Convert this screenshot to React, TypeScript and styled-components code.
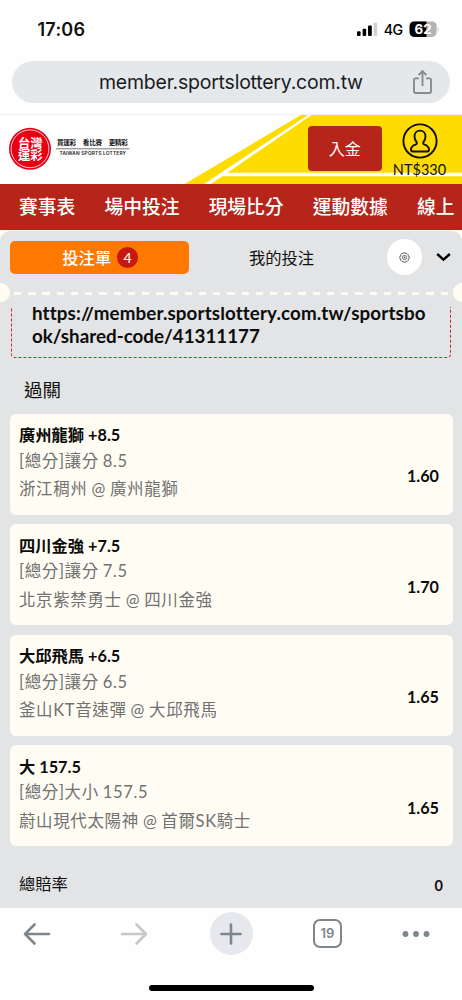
import React from 'react';
import styled, { createGlobalStyle } from 'styled-components';

const RED = '#b5251a';
const YELLOW = '#ffdc00';
const CREAM = '#fffdf3';
const PANEL = '#e3e4e6';
const ICON_GREY = '#7c868b';

const GlobalStyle = createGlobalStyle`
  * { box-sizing: border-box; }
  html, body { margin: 0; padding: 0; background: #fefefe; }
  body { font-family: Lato, "Noto Sans CJK TC", sans-serif; color: #111; }
  button { font: inherit; border: 0; padding: 0; margin: 0; background: none; color: inherit; }
  svg { display: block; flex: none; }
`;

const Screen = styled.div`
  width: 462px;
  height: 1000px;
  display: flex;
  flex-direction: column;
  overflow: hidden;
  background: #fefefe;
`;

const StatusBar = styled.div`
  height: 61px;
  flex: none;
  display: flex;
  justify-content: space-between;
  padding: 19px 22px 0 37.5px;
  font-family: Inter, sans-serif;
`;

const Clock = styled.div`
  font-size: 18px;
  font-weight: 600;
  line-height: 21px;
  letter-spacing: 0.25px;
`;

const AddressArea = styled.div`
  height: 54px;
  flex: none;
  padding: 0 12px;
  border-bottom: 1px solid #f1f1f1;
`;

const AddressBar = styled.div`
  height: 42px;
  border-radius: 21px;
  background: #e5e8eb;
  display: flex;
  align-items: center;
  justify-content: space-between;
  padding: 0 17px 0 87px;
  font-family: Inter, sans-serif;
  font-size: 19.5px;
  letter-spacing: -0.23px;
  color: #1a1c1e;
`;

const AddressText = styled.span`
  padding-bottom: 1px;
`;

const Header = styled.header`
  height: 69px;
  flex: none;
  position: relative;
  display: flex;
  align-items: flex-start;
  padding: 0 15.5px 0 8px;
`;

const HeaderArt = styled.svg`
  position: absolute;
  inset: 0;
`;

const Brand = styled.svg`
  position: relative;
  margin-top: 11px;
`;

const Deposit = styled.button`
  position: relative;
  width: 73.5px;
  height: 45px;
  margin: 11px 11px 0 auto;
  border-radius: 4px;
  background: ${RED};
  color: #fff;
  font-size: 16px;
  padding-bottom: 1px;
`;

const Account = styled.div`
  position: relative;
  width: 54px;
  display: flex;
  flex-direction: column;
  align-items: center;
  padding-top: 8px;
  white-space: nowrap;
  font-size: 14.5px;
  line-height: 18px;
`;

const Balance = styled.span`
  margin-top: 2px;
`;

const Nav = styled.nav`
  height: 46px;
  flex: none;
  display: flex;
  gap: 29.2px;
  padding-left: 19px;
  background: ${RED};
  color: #fff;
  font-size: 18.75px;
  font-weight: 500;
  line-height: 45px;
  white-space: nowrap;
  overflow: hidden;
`;

const SlipBackdrop = styled.div`
  flex: 1;
  min-height: 0;
  background: ${CREAM};
  border-bottom: 1px solid #d7d8da;
`;

const Slip = styled.main`
  height: 100%;
  margin-top: 1px;
  border-radius: 10px 10px 0 0;
  background: ${PANEL};
  overflow: hidden;
`;

const TabRow = styled.div`
  height: 52px;
  display: flex;
  align-items: center;
  padding: 0 11px 0 9.5px;
  font-size: 16.3px;
`;

const ActiveTab = styled.button`
  width: 179.5px;
  height: 33px;
  border-radius: 5px;
  background: #ff7900;
  color: #fff;
  font-weight: 500;
  display: flex;
  align-items: center;
  justify-content: center;
  gap: 6px;
  padding-left: 2px;
`;

const Count = styled.span`
  width: 21px;
  height: 21px;
  border-radius: 50%;
  background: #c5190f;
  font-size: 14px;
  line-height: 21px;
  text-align: center;
`;

const Tab = styled.button`
  margin-left: 60px;
  padding-bottom: 1px;
`;

const GearButton = styled.button`
  width: 35.5px;
  height: 35.5px;
  margin-left: auto;
  border-radius: 50%;
  background: #fff;
  display: grid;
  place-items: center;
`;

const Chevron = styled.svg`
  margin-left: 14px;
`;

const Perforation = styled.div`
  height: 19px;
  display: flex;
  align-items: center;
  justify-content: space-between;
`;

const Notch = styled.span<{ $side: 'left' | 'right' }>`
  width: 9.5px;
  height: 19px;
  background: ${CREAM};
  border-radius: ${p => (p.$side === 'left' ? '0 10px 10px 0' : '10px 0 0 10px')};
`;

const Dashes = styled.span`
  height: 2.5px;
  margin: 2px 0 0 4px;
  flex: 1;
  background: repeating-linear-gradient(90deg, ${CREAM} 0 7.3px, transparent 7.3px 14.22px);
`;

const CodeWindow = styled.div`
  height: 51px;
  margin: 5px 11px 1px 11px;
  overflow: hidden;
  display: flex;
  align-items: flex-end;
`;

const CodeBox = styled.div`
  flex: 1;
  height: 80px;
  display: flex;
  align-items: flex-end;
  border: 1px dashed #cc2430;
  border-radius: 4px;
  padding: 0 0 10px 20px;
  font-size: 18.8px;
  font-weight: 700;
  line-height: 23px;
  color: #0c0c0c;
  white-space: nowrap;
`;

const CodeLine = styled.div<{ $tracking?: number }>`
  letter-spacing: ${p => p.$tracking ?? 0}px;
`;

const SectionTitle = styled.h2`
  margin: 0;
  padding: 17px 0 0 24px;
  height: 54.8px;
  font-size: 18.5px;
  font-weight: 400;
  line-height: 28px;
`;

const Cards = styled.div`
  display: flex;
  flex-direction: column;
  gap: 9.3px;
  padding: 0 9.5px;
`;

const Card = styled.article`
  height: 101.2px;
  border-radius: 6px;
  background: ${CREAM};
  display: flex;
  justify-content: space-between;
  padding: 9.5px 13.5px 0 9.5px;
  white-space: nowrap;
`;

const Pick = styled.div`
  font-size: 16.3px;
  font-weight: 700;
  line-height: 24px;
  color: #0c0c0c;
`;

const Detail = styled.div<{ $gap: number }>`
  margin-top: ${p => p.$gap}px;
  font-size: 16.5px;
  letter-spacing: 0.62px;
  word-spacing: -0.8px;
  line-height: 24px;
  color: #717171;
`;

const Odds = styled.div`
  margin-top: 41px;
  font-size: 16.2px;
  font-weight: 700;
  line-height: 24px;
  color: #0c0c0c;
`;

const TotalRow = styled.div`
  display: flex;
  justify-content: space-between;
  padding: 25px 19px 0 19px;
  font-size: 16.3px;
  line-height: 26px;
`;

const TotalValue = styled.span`
  font-size: 14.5px;
  font-weight: 700;
  padding-top: 2px;
`;

const Toolbar = styled.footer`
  height: 92px;
  flex: none;
  display: flex;
  flex-direction: column;
  align-items: center;
  justify-content: space-between;
  padding: 4px 0 9px;
`;

const ToolRow = styled.div`
  width: 100%;
  height: 43px;
  display: grid;
  grid-template-columns: 74px 120px 74px 119px 57px;
  align-items: center;
  justify-items: center;
`;

const PlusButton = styled.button`
  width: 43px;
  height: 43px;
  border-radius: 50%;
  background: #e7e8ed;
  display: grid;
  place-items: center;
`;

const TabCount = styled.button`
  width: 29px;
  height: 29px;
  border: 2px solid ${ICON_GREY};
  border-radius: 7px;
  color: ${ICON_GREY};
  font-family: Inter, sans-serif;
  font-size: 13px;
  font-weight: 600;
  line-height: 25px;
`;

const HomeIndicator = styled.div`
  width: 165px;
  height: 6px;
  border-radius: 3px;
  background: #000;
`;

const StatusIcons = () => (
  <svg width="84" height="20" viewBox="357 19 84 20" fontFamily="Inter, sans-serif">
    <rect x="358" y="31.3" width="3.6" height="4.7" rx="1" />
    <rect x="363.6" y="28.8" width="3.6" height="7.2" rx="1" />
    <rect x="369" y="25.5" width="3.8" height="10.5" rx="1" />
    <rect x="374.7" y="22.7" width="3.4" height="13.3" rx="1" fill="#d0d0d0" />
    <text x="384.7" y="35.3" fontSize="14.2" fontWeight="500" textLength="19.5">4G</text>
    <clipPath id="cell"><rect x="410.6" y="21.5" width="27" height="15.4" rx="4.5" /></clipPath>
    <g clipPath="url(#cell)">
      <rect x="410" y="21" width="28" height="17" fill="#b3b3b3" />
      <rect x="410" y="21" width="17.4" height="17" />
    </g>
    <path d="M438.6 27.2c1.4.4 1.4 3.8 0 4.4z" fill="#b3b3b3" />
    <text x="415.6" y="34.1" fontSize="13.3" fontWeight="700" fill="#fff" textLength="17">62</text>
  </svg>
);

const ShareIcon = () => (
  <svg width="21" height="26" viewBox="0 0 21 26" fill="none" stroke="#868b90" strokeWidth="1.9">
    <path d="M7 9.4H3.6Q2 9.4 2 11v11.2Q2 24 3.8 24h13.4Q19 24 19 22.2V11q0-1.6-1.6-1.6H14M10.5 17V2.2M6.6 6.2l3.9-4 3.9 4" />
  </svg>
);

const BrandLogo = () => (
  <Brand width="124" height="46" viewBox="8 126 124 46" fontFamily='"Noto Sans CJK TC", sans-serif'>
    <circle cx="30" cy="148.8" r="21" fill="#e60012" />
    <circle cx="30" cy="148.8" r="18.9" fill="none" stroke="#fff" strokeWidth="0.8" />
    <g fill="#fff" fontSize="12.3" fontWeight="700">
      <text x="18" y="148.2" textLength="24.6">台灣</text>
      <text x="18" y="160.2" textLength="24.6">運彩</text>
    </g>
    <g fontSize="6.6" fontWeight="700" fill="#111">
      <text x="57" y="145.3" textLength="19">買運彩</text>
      <text x="82.7" y="145.3" textLength="19.5">看比賽</text>
      <text x="108.8" y="145.3" textLength="19">更精彩</text>
    </g>
    <path d="M56 148.8h73.5" stroke="#555" strokeWidth="0.8" />
    <text x="59.5" y="155.3" fontSize="4.8" fontWeight="600" fontFamily="Inter, sans-serif" fill="#222" textLength="66.5">TAIWAN SPORTS LOTTERY</text>
  </Brand>
);

const UserIcon = () => (
  <svg width="36" height="36" viewBox="0 0 36 36" fill="none" stroke="#111" strokeWidth="1.9">
    <circle cx="18" cy="18" r="16.6" />
    <path d="M18 7.6c-3.5 0-5.5 2.5-5.5 5.8 0 2.6 1 4.3 2.1 5.7.5 1 .2 1.9-.7 2.3-2.6 1-4.7 2-4.9 4.8 0 1.6.5 2.3 1.8 2.3h14.4c1.3 0 1.8-.7 1.8-2.3-.2-2.8-2.3-3.8-4.9-4.8-.9-.4-1.2-1.3-.7-2.3 1.1-1.4 2.1-3.1 2.1-5.7 0-3.3-2-5.8-5.5-5.8z" />
  </svg>
);

const GearIcon = () => (
  <svg width="11" height="11" viewBox="0 0 22 22" fill="none" stroke="#444" strokeWidth="1.5">
    <path d="M9 1.5h4l.8 2.3 2.2-1 2.9 2.9-1 2.3 2.6 1v4l-2.6 1 1 2.3-2.9 2.9-2.2-1-.8 2.3H9l-.9-2.3-2.3 1-2.9-2.9 1-2.3-2.4-1V9l2.4-1-1-2.3 2.900-2.900 2.300 1z" />
    <circle cx="11" cy="11" r="4.2" />
    <circle cx="11" cy="11" r="1" />
  </svg>
);

const Arrow = ({ forward }: { forward?: boolean }) => (
  <svg width="28" height="24" viewBox="0 0 28 24" fill="none" stroke={forward ? '#c6c7c8' : ICON_GREY} strokeWidth="2.6" strokeLinecap="round" strokeLinejoin="round">
    {forward ? <path d="M2 12h24M16.5 2.5L26 12l-9.5 9.5" /> : <path d="M26 12H2M11.5 2.5L2 12l9.5 9.5" />}
  </svg>
);

const bets = [
  { pick: '廣州龍獅 +8.5', market: '[總分]讓分 8.5', match: '浙江稠州 @ 廣州龍獅', odds: '1.60' },
  { pick: '四川金強 +7.5', market: '[總分]讓分 7.5', match: '北京紫禁勇士 @ 四川金強', odds: '1.70' },
  { pick: '大邱飛馬 +6.5', market: '[總分]讓分 6.5', match: '釜山KT音速彈 @ 大邱飛馬', odds: '1.65' },
  { pick: '大 157.5', market: '[總分]大小 157.5', match: '蔚山現代太陽神 @ 首爾SK騎士', odds: '1.65' },
];

export default function App() {
  return (
    <Screen>
      <GlobalStyle />
      <StatusBar>
        <Clock>17:06</Clock>
        <StatusIcons />
      </StatusBar>
      <AddressArea>
        <AddressBar>
          <AddressText>member.sportslottery.com.tw</AddressText>
          <ShareIcon />
        </AddressBar>
      </AddressArea>
      <Header>
        <HeaderArt width="462" height="69" viewBox="0 115 462 69">
          <path d="M184.5 184L301 115H462v69z" fill={YELLOW} />
          <path d="M204 184L308 115h3.5L211 184z" fill="#fff" />
          <path d="M224 172.7H462v3.5H219z" fill="#fff" />
        </HeaderArt>
        <BrandLogo />
        <Deposit>入金</Deposit>
        <Account>
          <UserIcon />
          <Balance>NT$330</Balance>
        </Account>
      </Header>
      <Nav>
        <span>賽事表</span>
        <span>場中投注</span>
        <span>現場比分</span>
        <span>運動數據</span>
        <span>線上</span>
      </Nav>
      <SlipBackdrop>
        <Slip>
          <TabRow>
            <ActiveTab>
              投注單<Count>4</Count>
            </ActiveTab>
            <Tab>我的投注</Tab>
            <GearButton><GearIcon /></GearButton>
            <Chevron width="15" height="10" viewBox="0 0 15 10" fill="none" stroke="#000" strokeWidth="2.5">
              <path d="M1.2 2l6.3 5.6L13.8 2" />
            </Chevron>
          </TabRow>
          <Perforation>
            <Notch $side="left" />
            <Dashes />
            <Notch $side="right" />
          </Perforation>
          <CodeWindow>
            <CodeBox>
              <div>
                <CodeLine $tracking={0.12}>https://member.sportslottery.com.tw/sportsbo</CodeLine>
                <CodeLine>ok/shared-code/41311177</CodeLine>
              </div>
            </CodeBox>
          </CodeWindow>
          <SectionTitle>過關</SectionTitle>
          <Cards>
            {bets.map(b => (
              <Card key={b.match}>
                <div>
                  <Pick>{b.pick}</Pick>
                  <Detail $gap={1.5}>{b.market}</Detail>
                  <Detail $gap={4.4}>{b.match}</Detail>
                </div>
                <Odds>{b.odds}</Odds>
              </Card>
            ))}
          </Cards>
          <TotalRow>
            <span>總賠率</span>
            <TotalValue>0</TotalValue>
          </TotalRow>
        </Slip>
      </SlipBackdrop>
      <Toolbar>
        <ToolRow>
          <Arrow />
          <Arrow forward />
          <PlusButton>
            <svg width="22" height="22" viewBox="0 0 22 22" stroke={ICON_GREY} strokeWidth="2.6" strokeLinecap="round">
              <path d="M11 1.5v19M1.5 11h19" />
            </svg>
          </PlusButton>
          <TabCount>19</TabCount>
          <svg width="28" height="8" viewBox="0 0 28 8" fill={ICON_GREY}>
            <circle cx="3.5" cy="4" r="2.9" />
            <circle cx="14" cy="4" r="2.9" />
            <circle cx="24.5" cy="4" r="2.9" />
          </svg>
        </ToolRow>
        <HomeIndicator />
      </Toolbar>
    </Screen>
  );
}
